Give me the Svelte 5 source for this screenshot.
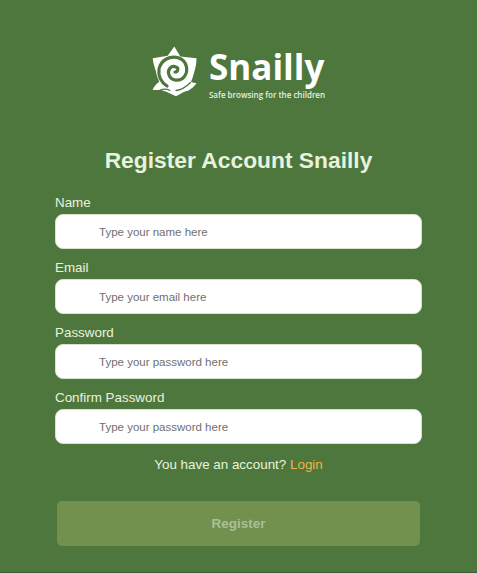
<script lang="ts">
  type Field = { label: string; type: string; placeholder: string };

  const fields: Field[] = [
    { label: 'Name', type: 'text', placeholder: 'Type your name here' },
    { label: 'Email', type: 'email', placeholder: 'Type your email here' },
    { label: 'Password', type: 'password', placeholder: 'Type your password here' },
    { label: 'Confirm Password', type: 'password', placeholder: 'Type your password here' }
  ];
</script>

<main class="page">
  <div class="logo">
    <svg class="mark" viewBox="0 0 46 52" width="46" height="52" aria-hidden="true">
      <path
        fill="#fff"
        d="M22.3 1.5 L28.3 11.5 L44.5 13.3 C44.5 19 43.5 23 42.3 26.7 C41.5 30 40.5 33.5 39 36.7 C41 37.5 42.5 38 44.5 38.2 C41.5 42.5 37 46 32.3 46.7 L24 51.2 L17 48 C14 46.5 11 45.5 9 45 L0.5 45 C2 41.5 4.5 38.5 7.3 36.7 C5.5 33 4.5 30 4 26.7 C2.5 22 1.2 18 0.7 13.3 L15.7 10.7 Z"
      />
      <path
        fill="none"
        stroke="#4e773e"
        stroke-width="3.2"
        stroke-linecap="round"
        d="M23 27 C26 27 27 23 24 22 C19 20 15 25 17 30 C19 36 28 37 32 32 C37 26 35 16 27 13 C18 10 9 15 7 24 C6 31 9 37 15 41"
      />
      <path fill="none" stroke="#4e773e" stroke-width="1.3" stroke-linecap="round" d="M24 45.5 C29 45 34 42 38.5 37.5" />
      <path fill="none" stroke="#4e773e" stroke-width="1.3" stroke-linecap="round" d="M8 45 C11 44 14 43.5 18 45.5" />
    </svg>
    <div class="brand">
      <span class="name">Snailly</span>
      <span class="tagline">Safe browsing for the children</span>
    </div>
  </div>

  <h1 class="title">Register Account Snailly</h1>

  <form class="form" onsubmit={(e) => e.preventDefault()}>
    {#each fields as field}
      <label class="field">
        <span class="label">{field.label}</span>
        <input class="input" type={field.type} placeholder={field.placeholder} />
      </label>
    {/each}

    <p class="switch">You have an account? <a href="#login">Login</a></p>

    <button class="submit" type="submit" disabled>Register</button>
  </form>
</main>

<style>
  :global(body) {
    background: #4e773e;
  }
  .page {
    box-sizing: border-box;
    height: 573px;
    padding-top: 45px;
    background: #4e773e;
    border-bottom: 1px solid #3f5a3a;
    font-family: "Liberation Sans", Arial, sans-serif;
    overflow: hidden;
  }
  .logo {
    display: flex;
    justify-content: center;
    align-items: flex-start;
    gap: 11px;
    height: 55px;
  }
  .brand {
    display: flex;
    flex-direction: column;
    font-family: "Open Sans", sans-serif;
    color: #fff;
  }
  .name {
    font-size: 35px;
    font-weight: 700;
    line-height: 44px;
  }
  .tagline {
    margin-top: 1px;
    font-size: 8px;
    font-weight: 600;
    line-height: 10px;
    color: #e6eee0;
  }
  .title {
    margin: 46px 0 0;
    text-align: center;
    font-size: 22.8px;
    line-height: 28px;
    font-weight: 700;
    color: #e8f3df;
  }
  .form {
    display: flex;
    flex-direction: column;
    padding: 21px 55px 0;
  }
  .field {
    display: flex;
    flex-direction: column;
    gap: 3px;
    margin-bottom: 11px;
  }
  .label {
    font-size: 13.4px;
    line-height: 16px;
    color: #e8f3df;
  }
  .input {
    box-sizing: border-box;
    width: 100%;
    height: 35px;
    padding: 0 43px;
    border: 1px solid #d7e2cf;
    border-radius: 8px;
    background: #fff;
    font-family: inherit;
    font-size: 11.5px;
  }
  .input::placeholder {
    color: #6f6f73;
    opacity: 1;
  }
  .switch {
    margin: 1px 0 0;
    text-align: center;
    font-size: 13.4px;
    line-height: 18px;
    color: #e8f3df;
  }
  .switch a {
    color: #eeb544;
    text-decoration: none;
  }
  .submit {
    height: 45px;
    margin: 27px 2px 0;
    border: none;
    border-radius: 5px;
    background: #72904e;
    color: #a9bf97;
    font-family: inherit;
    font-size: 13.5px;
    font-weight: 700;
  }
</style>
